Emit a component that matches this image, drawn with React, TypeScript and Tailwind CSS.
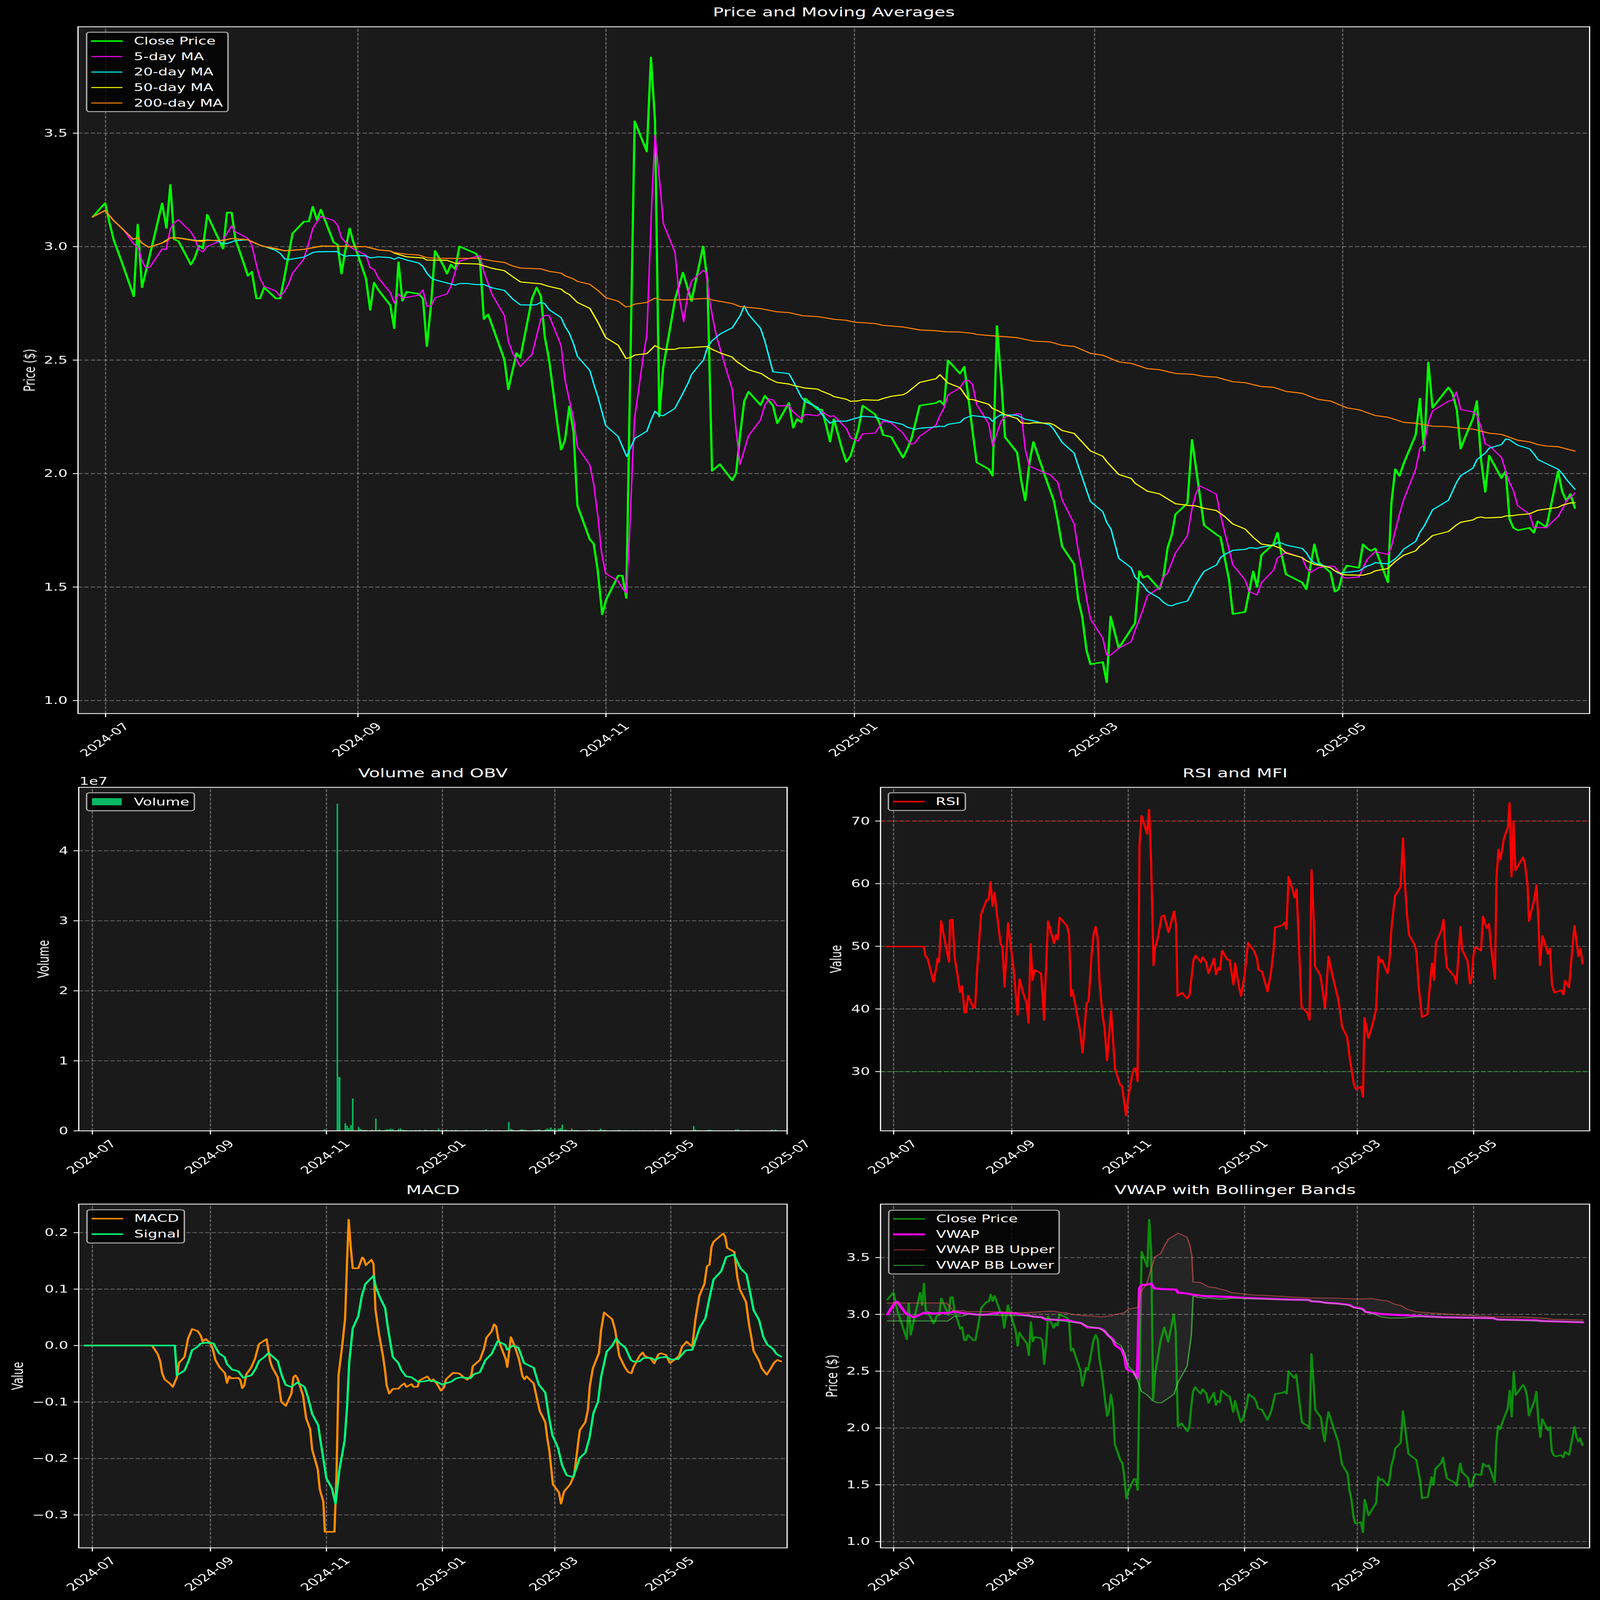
import React from "react";

type P = [number, number];
const map = (ox: number, oy: number, sx: number, sy: number, a: number[]): P[] => {
  const o: P[] = [];
  for (let i = 0; i < a.length; i += 2) o.push([ox + a[i] / sx, oy + a[i + 1] / sy]);
  return o;
};
const Z5 = (a: number[]) => map(220, 650, 0.9224, 0.9224, a);
const Z6 = (a: number[]) => map(1650, 1100, 0.9224, 0.9224, a);
const Z7 = (a: number[]) => map(2900, 1300, 1.018, 1.018, a);
const Z8 = (a: number[]) => map(2280, 3200, 0.716, 1.081, a);
const Z9 = (a: number[]) => map(0, 4880, 0.7063, 1.206, a);
const Z10 = (a: number[]) => map(3000, 4880, 1.0667, 1.0667, a);
const Z12 = (a: number[]) => map(2300, 5000, 1.206, 1.206, a);
const d = (p: P[]) => p.map(([x, y], i) => `${i ? "L" : "M"}${x.toFixed(1)} ${y.toFixed(1)}`).join("");

const close: P[] = [
  ...Z5([36,214,68,162,80,240,90,300,110,380,142,512,152,243,163,478,182,365,215,163,226,256,236,94,246,298,257,305,289,393,299,367,310,322,320,333,331,206,372,333,382,198,394,198,404,300,415,345,436,435,446,420,458,520,467,520,478,479,508,520,519,520,530,440,541,355,551,276,580,232,593,231,603,176,614,226,624,187,657,310,667,318,677,427,687,340,698,257,708,310,720,360,740,445,751,563,761,461,772,488,803,546,813,632,824,384,834,529,845,495,876,503,887,520,897,699,908,540,918,342,939,395,949,427,959,393,970,410,981,325,1024,352,1034,380,1044,597,1055,580,1097,750,1107,861,1118,790,1128,725,1138,743,1168,520,1180,479,1191,512,1201,665,1212,750,1222,860,1233,985,1243,1087,1253,1052,1264,925,1275,1020,1285,1297,1317,1424,1327,1440]),
  ...Z6([18,1120,30,1290,40,1235,71,1145,82,1145,92,1228]),
  [1773,493],[1807,616],[1818.6,234],[1830,493],[1836,1100],
  ...Z6([177,548,187,365,218,106,238,8,260,115,290,-90,301,38,313,752,333,727,365,787,375,760,385,620,396,490,407,455,438,505,449,470,470,507,481,573,511,497,522,590,532,557,543,570,553,480,585,521,596,522,606,575,617,642,627,558,649,675,659,718,670,695,680,645,691,590,701,507,733,540,744,570,754,617,775,625,805,702,816,670,827,630,848,507,890,497,900,489,911,505,921,337,952,387,963,361,973,470,984,600,995,720,1026,745,1036,770,1047,208,1058,410,1068,625,1099,683,1110,790,1120,863,1131,720,1141,643,1172,775,1194,865,1204,940,1215,1035,1246,1102,1256,1230,1267,1300,1278,1425,1288,1477,1320,1469,1330,1545,1340,1298,1361,1417,1403,1323,1414,1128,1424,1153,1435,1145,1466,1195,1476,1150,1487,1040,1498,990,1507,915,1538,873]),
  ...Z7([438,497,472,851,508,890,519,900,543,1075,554,1219,589,1210,612,1042,623,1107,635,975,670,928,681,882,693,975,705,1054,751,1088,763,1116,786,930,798,1004,832,1047,844,1126,855,1117,867,1047,878,1018,913,1027,924,930,936,947,947,957,959,947,995,1087,1005,760,1016,619,1028,647,1040,595,1074,477,1086,327,1098,543,1110,177,1122,365,1167,281,1179,306,1191,373,1202,534,1225,450,1237,410,1248,337,1260,580,1272,713,1283,563,1318,656,1330,627,1341,825,1352,862,1364,872,1398,862,1410,882,1421,835,1446,860,1479,628,1491,713,1503,750,1514,722,1527,780]),
];
const ma5: P[] = [
  ...Z5([36,214,68,190,90,228,115,262,140,312,155,335,163,380,173,405,183,403,215,334,225,337,236,260,246,235,257,225,289,270,299,295,310,338,320,345,331,325,372,300,394,248,404,270,436,295,446,320,458,395,467,445,478,475,508,492,519,512,530,495,541,465,551,425,580,372,593,310,603,258,614,232,624,212,656,227,667,245,677,292,698,325,708,335,740,357,751,405,761,411,772,443,803,498,813,537,824,503,834,518,845,516,876,508,887,488,897,549,908,549,918,518,949,503,959,475,970,420,981,380,1024,363,1034,360,1044,420,1065,505,1097,585,1107,680,1118,725,1138,775,1168,730,1191,597,1201,584,1212,584,1243,697,1253,825,1264,900,1275,970,1285,1077,1317,1145,1327,1215,1338,1340,1347,1470,1358,1553]),
  ...Z6([40,1137,71,1165,82,1193,92,1209,100,1000,108,720,113,560,135,330,145,240]),
  [1821.5,800],[1830,551],[1847,800],[1853,908],[1886,1027],[1898,1214],
  ...Z6([240,192,250,90,260,40,290,0,298,8,305,100,315,180,325,250,345,350,365,445,375,600,385,728,407,620,438,560,449,505,460,482,470,485,481,508,511,507,522,530,543,557,553,540,585,545,596,530,617,548,627,545,659,592,670,628,690,640,701,613,733,610,754,565,775,572,805,610,816,635,827,652,836,647,848,622,890,580,900,545,911,515,921,467,952,440,963,415,973,411,984,427,995,503,1026,575,1036,658,1047,610,1058,565,1068,550,1099,537,1110,540,1120,670,1131,735,1141,740,1172,760,1183,765,1204,795,1215,860,1246,950,1256,1045,1267,1130,1278,1230,1288,1307,1320,1380,1330,1443,1340,1443,1361,1417,1393,1393,1403,1350,1414,1310,1425,1265,1435,1220,1466,1190,1476,1150,1487,1135,1498,1095,1507,1060,1538,995]),
  ...Z7([438,780,449,720,460,688,507,722,519,810,531,880,543,950,554,1015,589,1078,600,1125,623,1140,635,1090,670,1037,681,987,705,963,740,980,751,985,763,1027,775,1047,798,1027,832,1020,844,1023,867,1067,878,1070,913,1065,924,1030,936,993,959,960,995,972,1005,940,1028,805,1040,745,1074,620,1086,533,1098,518,1110,425,1122,378,1167,338,1179,333,1190,300,1202,372,1237,382,1248,393,1260,445,1272,515,1283,521,1318,570,1330,627,1341,675,1352,707,1364,770,1398,806,1410,861,1446,861,1479,815,1491,785,1503,750,1527,718]),
];
const ma20: P[] = [
  ...Z5([36,214,68,190,90,228,115,262,140,298,152,292,163,312,180,328,215,312,236,293,257,293,290,300,320,305,331,300,360,305,372,315,384,313,404,303,436,300,458,315,478,325,508,340,520,352,531,372,541,374,580,365,603,348,614,345,665,344,677,356,687,362,698,359,740,360,752,368,772,364,803,367,813,373,824,366,845,376,876,387,887,400,897,425,908,443,918,450,970,470,981,464,1000,464,1024,468,1044,468,1065,480,1097,490,1107,505,1118,522,1138,544,1168,545,1180,543,1191,534,1201,540,1212,562,1243,592,1253,625,1264,650,1275,690,1285,737,1317,790,1327,840,1338,890,1358,997,1390,1038,1412,1113,1422,1080,1433,1045,1464,1018,1475,975,1485,943,1495,957,1506,960,1536,933]),
  ...Z6([238,460,252,420,260,390,291,335,302,285,312,265,335,237,365,215,385,170,396,133,407,165,438,217,449,265,470,380,511,387,522,415,543,475,553,492,585,513,596,540,617,573,627,565,659,565,700,547,733,550,754,560,805,578,816,588,836,596,848,592,890,587,900,584,911,586,921,577,952,570,963,555,984,544,1026,552,1036,566,1047,550,1058,541,1099,543,1120,558,1141,564,1183,579,1194,597,1215,645,1246,685,1256,730,1288,867,1320,905,1330,945,1341,970,1361,1080,1393,1115,1403,1150,1424,1180,1435,1203,1466,1230,1476,1245,1487,1255,1498,1258,1507,1252,1538,1240]),
  ...Z7([438,1130,449,1095,472,1042,508,1015,519,985,531,972,554,955,589,951,600,945,612,945,623,947,635,942,670,933,681,923,693,925,705,933,751,947,763,965,775,993,786,1007,832,1027,844,1040,855,1050,913,1040,924,1030,936,1020,947,1015,959,1006,995,1011,1016,990,1028,973,1040,950,1074,918,1086,880,1098,855,1122,787,1144,768,1167,748,1191,672,1202,646,1237,615,1248,580,1272,552,1283,532,1318,517,1330,494,1341,497,1364,520,1398,535,1410,555,1422,580,1444,595,1479,619,1491,637,1503,662,1527,702]),
];
const ma50: P[] = [
  ...Z5([36,214,68,190,90,228,115,262,140,298,152,292,163,312,180,328,215,312,236,293,257,293,300,303,331,302,372,302,394,295,436,300,470,322,510,335,531,341,580,336,625,324,665,324,740,326,772,338,803,342,813,350,845,364,887,368,897,376,949,377,970,388,1030,391,1065,407,1097,416,1118,438,1138,458,1190,465,1212,475,1243,485,1253,497,1264,505,1285,535,1317,557,1338,610,1358,667,1390,695,1410,745,1422,742,1433,732,1464,727,1485,697,1495,705,1506,711,1536,711]),
  ...Z6([228,291,250,290,300,285,315,297,335,310,365,325,375,340,408,373,440,387,460,406,480,420,511,426,522,431,553,441,585,445,596,453,617,465,627,473,659,483,670,491,691,489,701,485,740,487,754,480,775,472,805,466,816,458,848,420,890,406,900,391,921,422,952,440,973,483,984,484,1026,502,1036,518,1047,524,1068,541,1099,555,1110,572,1131,574,1141,571,1183,573,1194,579,1215,600,1246,611,1288,677,1320,697,1330,717,1361,765,1393,780,1403,798,1435,828,1466,838,1507,875,1538,881]),
  ...Z7([449,771,472,781,507,790,531,815,554,846,589,867,612,901,635,929,670,936,693,948,705,966,751,985,763,998,786,1013,832,1027,844,1040,867,1055,878,1057,924,1058,947,1049,959,1040,995,1030,1016,1001,1040,975,1074,957,1086,937,1098,925,1122,894,1167,877,1190,850,1202,839,1237,829,1248,820,1260,817,1272,821,1318,818,1330,813,1352,811,1364,808,1398,804,1422,789,1479,777,1491,768,1514,759,1527,758]),
];
const ma200: P[] = [
  ...Z5([36,214,68,190,90,228,115,262,140,298,152,292,163,312,180,328,215,312,225,306,236,293,257,294,300,304,320,307,331,302,372,303,394,295,436,300,470,322,510,333,531,341,580,336,625,323,665,324,740,326,772,338,803,342,813,348,845,354,876,357,897,367,918,369,970,370,1030,369,1065,379,1097,385,1118,398,1138,406,1190,409,1212,418,1243,425,1253,435,1275,447,1285,456,1317,467,1338,490,1358,517,1390,530,1410,552,1422,549,1433,541,1464,535,1485,519,1495,523,1506,526,1536,526]),
  ...Z6([250,108,300,105,315,111,365,124,385,135,438,143,480,155,511,158,548,170,585,173,627,183,659,187,680,194,733,199,754,206,805,212,848,223,890,226,915,230,952,231,985,236,995,240,1036,245,1099,252,1141,265]),
  ...Z7([34,92,68,106,103,111,150,140,184,147,230,175,265,181,311,203,345,207,392,223,438,226,472,235,507,238,554,257,589,261,635,277,670,280,705,297,751,305,796,330,832,337,878,365,913,373,959,397,995,404,1040,425,1074,429,1122,441,1167,443,1202,450,1237,453,1283,470,1318,475,1364,499,1398,506,1422,517,1444,523,1479,526,1527,544]),
];
const rsi = Z8([141,702,215,702,219,745,223,755,235,858,240,800,243,755,246,770,250,590,257,670,262,730,266,770,268,585,273,585,277,750,283,830,288,903,292,875,297,993,300,993,304,917,315,973,318,970,322,810,330,560,341,497,345,497,349,418,353,525,357,465,362,565,369,690,373,705,377,880,384,598,389,695,395,800,403,1003,407,845,414,905,421,950,425,1038,429,690,433,850,437,805,450,820,456,1025,460,790,464,590,476,688,480,650,483,672,487,574,502,612,506,650,510,920,513,893,522,1000,528,1070,533,1170,541,950,545,945,551,740,555,650,559,615,563,660,567,860,573,1005,577,1060,582,1203,590,985,598,1240,608,1310,612,1315,620,1445,624,1370,628,1320,632,1270,636,1238,640,1238,643,1295,647,250,651,127,662,207,666,100,670,320,675,785,678,710,684,660,691,570,696,565,705,640,716,547,720,605,723,920,732,905,742,930,747,915,755,760,759,742,770,772,773,748,780,770,785,820,796,755,800,825,805,795,808,805,812,720,823,760,827,760,835,870,838,775,846,880,850,920,857,830,864,685,876,722,882,755,885,805,892,812,903,900,910,815,915,720,918,618,933,608,938,595,941,625,945,395,953,450,957,487,961,450,965,650,971,968,983,995,987,1025,991,365,995,560,998,790,1009,830,1018,972,1025,745,1033,830,1044,930,1048,985,1052,1055,1062,1098,1068,1200,1076,1310,1080,1330,1090,1317,1094,1363,1097,1015,1105,1105,1113,1045,1120,980,1125,745,1129,772,1132,760,1143,820,1147,760,1151,620,1158,480,1169,440,1174,225,1177,400,1182,560,1186,650,1198,697,1201,730,1205,870,1212,1013,1223,1000,1227,890,1232,775,1236,850,1240,685,1251,630,1255,583,1259,730,1262,795,1277,835,1281,865,1289,615,1292,715,1303,765,1308,865,1312,830,1315,740,1319,705,1330,720,1334,570,1338,600,1342,622,1346,602,1350,700,1358,845,1361,400,1365,275,1369,320,1376,225,1384,175,1387,70,1391,395,1395,150,1399,367,1410,325,1414,310,1418,340,1423,430,1426,590,1437,490,1441,432,1445,600,1448,785,1453,655,1460,705,1464,735,1468,710,1472,870,1477,905,1487,897,1491,895,1495,913,1498,852,1506,882,1510,780,1517,610,1525,745,1529,710,1533,778]);
const macd = Z9([167,714,300,714,311,755,316,790,320,850,325,880,335,900,341,917,349,870,353,800,364,770,371,680,379,633,390,643,396,665,400,695,406,682,414,700,420,730,425,785,433,820,444,850,448,898,452,865,456,875,470,873,474,882,478,923,482,910,486,855,495,825,503,780,511,707,526,682,533,790,537,820,548,870,555,990,564,1010,575,950,579,870,583,860,587,875,598,960,604,1070,612,1125,616,1225,627,1320,631,1420,638,1480,641,1628,660,1628,664,1350,668,860,675,720,681,580,685,290,688,97,692,230,696,335,707,335,715,282,718,290,722,320,733,293,737,315,741,540,748,660,756,770,760,840,763,910,768,950,775,927,786,926,793,908,798,900,802,917,812,903,816,917,824,916,828,885,843,866,851,890,855,880,863,905,870,935,876,920,880,880,894,848,906,851,918,875,922,882,930,860,933,815,947,785,955,730,960,675,970,645,975,610,979,620,983,680,990,730,998,780,1001,820,1008,673,1016,720,1024,780,1031,865,1035,880,1039,865,1053,900,1060,980,1065,1035,1076,1090,1080,1170,1084,1230,1091,1395,1103,1435,1107,1490,1113,1430,1125,1395,1133,1350,1140,1210,1144,1130,1155,1090,1160,1030,1164,910,1170,825,1182,750,1186,640,1192,552,1208,585,1214,640,1222,765,1234,825,1240,845,1246,850,1250,820,1262,765,1268,748,1272,765,1284,778,1291,802,1299,758,1304,752,1314,760,1322,800,1330,785,1340,765,1346,720,1355,695,1366,720,1372,590,1380,470,1390,412,1395,325,1400,318,1404,230,1408,205,1422,175,1427,165,1431,180,1435,235,1449,255,1455,380,1460,440,1472,500,1478,610,1483,680,1487,740,1498,790,1503,825,1513,857,1520,830,1528,797,1534,785,1541,792]);
const signal = Z9([167,714,345,714,349,860,364,837,372,790,379,737,390,720,395,705,406,700,421,703,432,752,443,770,448,805,458,832,470,840,480,872,496,860,504,830,511,790,521,772,530,750,548,790,556,860,564,908,575,917,587,895,601,917,608,970,616,1050,628,1105,632,1175,640,1300,644,1365,655,1415,662,1490,670,1320,680,1180,685,1010,689,800,696,630,707,570,714,470,721,412,737,372,742,430,750,480,760,530,765,620,775,770,786,800,792,835,801,865,812,870,825,893,840,888,847,885,860,890,872,905,890,892,900,875,910,870,928,875,935,855,947,845,958,785,970,755,982,693,997,710,1001,735,1011,715,1023,725,1034,800,1053,823,1063,905,1076,945,1083,1060,1090,1155,1101,1215,1109,1300,1118,1350,1131,1360,1138,1310,1144,1265,1155,1240,1163,1170,1171,1045,1180,990,1186,870,1197,745,1208,715,1216,680,1222,700,1234,725,1245,785,1250,793,1262,792,1270,775,1285,775,1292,785,1302,773,1315,770,1325,783,1338,780,1353,738,1366,735,1372,690,1381,625,1392,580,1400,480,1408,390,1423,350,1433,280,1448,268,1461,335,1473,365,1480,450,1487,540,1498,590,1506,670,1514,710,1525,730,1532,755,1541,768]);
const vwap: P[] = [
  ...Z12([216,417,237,370,245,355,250,356,280,415,290,418,302,430,310,428,340,409,350,408,370,412,400,410,425,408,440,403,480,412,520,418,550,418,575,412,600,408,625,411,648,411,655,415,690,423,710,428,735,430,750,442,825,445,840,452,868,459,890,480,930,484,945,495,960,520,975,537,983,567,1005,590,1015,625,1022,683,1030,692,1045,700,1058,730,1065,290,1072,273,1090,271,1105,265,1115,289,1140,292,1189,295,1195,310,1225,314,1250,321,1285,327,1320,328,1400,334]),
  ...Z10([510,425,640,432,700,434,708,440,735,442,750,446,785,449,820,455,835,466,860,472,870,486,915,495,970,499,1100,509,1250,513,1262,519,1380,522,1390,525,1517,531]),
];
const bbU: P[] = [
  ...Z12([216,361,415,361,425,375,438,398,470,398,485,403,520,403,570,403,610,405,640,408,690,408,720,405,755,401,780,402,800,407,820,410,850,419,880,423,905,424,935,429,970,424,985,417,1015,408,1028,390,1055,384,1060,385,1068,310,1090,265,1105,190,1117,135,1137,118,1148,85,1163,47,1180,33,1195,18,1225,38,1235,75,1242,130,1246,258,1270,260,1298,282,1320,285,1343,295,1360,300,1375,310,1420,317,1455,322,1500,324,1568,331]),
  ...Z10([700,425,780,426,845,430,890,428,915,435,935,438,958,453,975,458,995,475,1020,485,1060,490,1190,502,1250,507,1340,508,1400,513,1430,518,1517,521]),
];
const bbL: P[] = [
  ...Z12([216,449,420,449,440,427,470,425,490,414,515,418,600,422,690,423,745,435,825,453,870,460,890,475,930,485,950,500,975,545,1003,570,1015,605,1028,670,1045,695,1060,745,1072,795,1090,810,1110,840,1125,850,1140,850,1160,830,1182,808,1195,750,1226,670,1240,520,1246,327,1262,333,1285,338,1300,336,1335,342,1365,340,1378,337,1420,339,1568,345]),
  ...Z10([700,434,708,438,735,442,750,447,785,450,820,457,835,467,860,475,870,486,895,495,917,508,945,513,985,512,1030,505,1100,509,1250,513,1262,519,1380,525,1517,530]),
];
const closeV: P[] = close.map(([x, y]) => {
  const t = (x - 295) / 11.37;
  const price = 1 + (2849 - y) / 923;
  return [2496.5 + t * 5.33, 6269.5 - (price - 1) * 462];
});
const bars = [8,1358,39,1366,58,941,78,1310,84,1330,90,1348,97,1324,103,1112,123,1340,129,1355,135,1363,141,1364,148,1364,167,1360,173,1365,181,1272,193,1358,212,1363,218,1357,225,1358,231,1353,238,1356,257,1355,264,1351,270,1362,276,1364,283,1364,302,1366,315,1364,321,1366,328,1362,347,1360,353,1364,366,1365,372,1365,392,1353,398,1366,418,1360,437,1364,450,1362,482,1366,488,1364,502,1366,507,1366,533,1366,540,1364,546,1366,552,1358,572,1364,591,1366,598,1364,623,1366,629,1299,636,1355,642,1360,661,1364,668,1360,674,1358,681,1362,687,1364,712,1362,719,1362,726,1360,732,1358,752,1360,758,1351,764,1358,770,1344,777,1358,784,1350,797,1352,803,1348,809,1320,816,1362,822,1360,841,1352,848,1365,855,1364,861,1364,886,1366,899,1360,905,1366,912,1364,931,1364,938,1352,944,1364,950,1364,956,1364,975,1366,982,1366,988,1366,995,1364,1002,1362,1020,1366,1027,1366,1047,1366,1066,1366,1085,1366,1124,1364,1136,1366,1162,1366,1207,1366,1245,1366,1252,1332,1258,1360,1265,1366,1271,1364,1290,1366,1297,1364,1303,1362,1309,1362,1316,1366,1341,1366,1393,1360,1400,1358,1406,1364,1425,1366,1431,1364,1438,1366,1476,1366,1496,1366,1515,1360,1522,1364,1528,1360,1534,1366];
const volumeBars: { x: number; y: number; w: number }[] = [{ x: 942.5, y: 3269, w: 4.25 }];
for (let i = 0; i < bars.length; i += 2) {
  volumeBars.push({ x: 900 + bars[i] / 1.206, y: 3900 + bars[i + 1] / 1.96, w: bars[i] === 58 ? 6 : 4.25 });
}

const GRID = { stroke: "#ffffff", strokeOpacity: 0.33, strokeWidth: 3.33, strokeDasharray: "12.33 5.33", fill: "none" };
const TICK = 41.67;

type Tick = { p: number; label: string };
function Chart(props: {
  box: string;
  cls: string;
  l: number; r: number; t: number; b: number;
  xt: Tick[]; yt: Tick[];
  ylabel: string; ylx: number;
  children: React.ReactNode;
}) {
  const { box, cls, l, r, t, b, xt, yt, ylabel, ylx, children } = props;
  return (
    <svg viewBox={box} className={cls}>
      <rect x={l} y={t} width={r - l} height={b - t} className="fill-[#1a1a1a]" />
      {xt.map((k) => <path key={k.label} d={`M${k.p} ${b}L${k.p} ${t}`} {...GRID} />)}
      {yt.map((k) => <path key={k.label} d={`M${l} ${k.p}L${r} ${k.p}`} {...GRID} />)}
      {children}
      <rect x={l} y={t} width={r - l} height={b - t} fill="none" stroke="#ffffff" strokeWidth={3.33} />
      {xt.map((k) => (
        <g key={k.label}>
          <path d={`M${k.p} ${b}L${k.p} ${b + 14.6}`} stroke="#ffffff" strokeWidth={3.33} />
          <text
            x={k.p - 3}
            y={b + 106}
            fontSize={TICK}
            textAnchor="middle"
            dominantBaseline="central"
            transform={`rotate(-45 ${k.p - 3} ${b + 106})`}
            className="fill-white"
          >
            {k.label}
          </text>
        </g>
      ))}
      {yt.map((k) => (
        <g key={k.label}>
          <path d={`M${l} ${k.p}L${l - 14.6} ${k.p}`} stroke="#ffffff" strokeWidth={3.33} />
          <text x={l - 29.2} y={k.p} fontSize={TICK} textAnchor="end" dominantBaseline="central" className="fill-white">
            {k.label}
          </text>
        </g>
      ))}
      <text
        x={ylx}
        y={(t + b) / 2}
        fontSize={TICK}
        textAnchor="middle"
        dominantBaseline="central"
        transform={`rotate(-90 ${ylx} ${(t + b) / 2})`}
        className="fill-white"
      >
        {ylabel}
      </text>
    </svg>
  );
}

const Line = ({ p, c, w = 4.17, o = 1 }: { p: P[]; c: string; w?: number; o?: number }) => (
  <path d={d(p)} fill="none" stroke={c} strokeWidth={w} strokeOpacity={o} strokeLinejoin="round" strokeLinecap="round" />
);

function Legend({ cls, items }: { cls: string; items: { label: string; swatch: string }[] }) {
  return (
    <div className={`absolute flex flex-col justify-center rounded-[10px] border-[4px] border-[#ababab] bg-black/80 pl-[10px] text-[41.67px] leading-none text-white ${cls}`}>
      {items.map((it) => (
        <div key={it.label} className="flex h-[63px] items-center gap-[31px]">
          <div className="flex w-[89px] justify-center"><div className={it.swatch} /></div>
          <span className="whitespace-nowrap">{it.label}</span>
        </div>
      ))}
    </div>
  );
}

const T1 = "text-[50px] leading-none text-white flex items-center justify-center";
const ticks = (a: [number, string][]): Tick[] => a.map(([p, label]) => ({ p, label }));
const xMain = ticks([[295,"2024-07"],[1000,"2024-09"],[1693,"2024-11"],[2387,"2025-01"],[3058,"2025-03"],[3751,"2025-05"]]);
const xVol = ticks([[258,"2024-07"],[588,"2024-09"],[912,"2024-11"],[1236,"2025-01"],[1550,"2025-03"],[1874,"2025-05"],[2199,"2025-07"]]);
const xLeft: Tick[] = xVol.slice(0, 6);
const xRight = ticks([[2496.5,"2024-07"],[2826.5,"2024-09"],[3152,"2024-11"],[3477,"2025-01"],[3792,"2025-03"],[4117,"2025-05"]]);
const yPrice1: Tick[] = ["1.0","1.5","2.0","2.5","3.0","3.5"].map((label, i) => ({ label, p: 2849 - i * 461.5 }));
const yVol: Tick[] = ["0","1","2","3","4"].map((label, i) => ({ label, p: 4599 - i * 284.75 }));
const yRsi: Tick[] = ["30","40","50","60","70"].map((label, i) => ({ label, p: 4358 - i * 254.75 }));
const yMacd: Tick[] = ["−0.3","−0.2","−0.1","0.0","0.1","0.2"].map((label, i) => ({ label, p: 6161 - i * 229.6 }));
const yVwap: Tick[] = ["1.0","1.5","2.0","2.5","3.0","3.5"].map((label, i) => ({ label, p: 6269.5 - i * 231 }));

export default function App() {
  // The figure is 4470×6507. In a window of that size this scale is 1; in any other window it keeps the whole figure in view.
  const sx = window.innerWidth / 4470;
  const sy = window.innerHeight / 6507;
  return (
    <div className="h-screen w-screen overflow-hidden bg-black">
      <div
        className="flex h-[6507px] w-[4470px] origin-top-left flex-col bg-black [font-family:'DejaVu_Sans',sans-serif]"
        style={{ transform: `scale(${sx}, ${sy})` }}
      >
        <section className="flex h-[3030px] flex-col">
          <h2 className={`${T1} h-[100px] pl-[218px] pr-[29px]`}>Price and Moving Averages</h2>
          <div className="relative">
            <Chart box="0 100 4470 2930" cls="block h-[2930px] w-[4470px] overflow-visible" l={218} r={4441} t={109} b={2902} xt={xMain} yt={yPrice1} ylabel="Price ($)" ylx={83}>
              <Line p={close} c="#00ff00" w={6.25} />
              <Line p={ma5} c="#ff00ff" />
              <Line p={ma20} c="#00ffff" />
              <Line p={ma50} c="#ffff00" />
              <Line p={ma200} c="#ff8000" />
            </Chart>
            <Legend
              cls="left-[240px] top-[29px] h-[327px] w-[399px]"
              items={[
                { label: "Close Price", swatch: "h-[6px] w-[89px] bg-[#00ff00]" },
                { label: "5-day MA", swatch: "h-[4px] w-[87px] bg-[#ff00ff]" },
                { label: "20-day MA", swatch: "h-[4px] w-[87px] bg-[#00ffff]" },
                { label: "50-day MA", swatch: "h-[4px] w-[87px] bg-[#ffff00]" },
                { label: "200-day MA", swatch: "h-[4px] w-[87px] bg-[#ff8000]" },
              ]}
            />
          </div>
        </section>

        <section className="grid h-[1760px] grid-cols-2">
          <div className="flex flex-col pt-[84px]">
            <h2 className={`${T1} h-[60px] pl-[220px] pr-[36px]`}>Volume and OBV</h2>
            <div className="relative">
              <Chart box="0 3174 2235 1616" cls="block h-[1616px] w-[2235px] overflow-visible" l={220} r={2199} t={3202} b={4599} xt={xVol} yt={yVol} ylabel="Volume" ylx={122}>
                {volumeBars.map((v, i) => (
                  <rect key={i} x={v.x - v.w / 2} y={v.y} width={v.w} height={4599 - v.y} fill="#00ff7f" fillOpacity={0.7} />
                ))}
                <text x={222} y={3192} fontSize={TICK} className="fill-white">1e7</text>
              </Chart>
              <Legend
                cls="left-[240px] top-[48px] h-[77px] w-[305px]"
                items={[{ label: "Volume", swatch: "h-[29px] w-[83px] bg-[#08b862]" }]}
              />
            </div>
          </div>
          <div className="flex flex-col pt-[84px]">
            <h2 className={`${T1} h-[60px] pl-[225px] pr-[29px]`}>RSI and MFI</h2>
            <div className="relative">
              <Chart box="2235 3174 2235 1616" cls="block h-[1616px] w-[2235px] overflow-visible" l={2460} r={4441} t={3202} b={4599} xt={xRight} yt={yRsi} ylabel="Value" ylx={2336}>
                <path d="M2460 3339L4441 3339" stroke="#ff0000" strokeOpacity={0.5} strokeWidth={4.17} strokeDasharray="15.4 6.67" />
                <path d="M2460 4358L4441 4358" stroke="#00ff00" strokeOpacity={0.35} strokeWidth={4.17} strokeDasharray="15.4 6.67" />
                <Line p={rsi} c="#ff0000" w={6} />
              </Chart>
              <Legend
                cls="left-[245px] top-[48px] h-[76px] w-[219px]"
                items={[{ label: "RSI", swatch: "h-[6px] w-[88px] bg-[#ff0000]" }]}
              />
            </div>
          </div>
        </section>

        <section className="grid h-[1717px] grid-cols-2">
          <div className="flex flex-col pt-[20px]">
            <h2 className={`${T1} h-[60px] pl-[220px] pr-[36px]`}>MACD</h2>
            <div className="relative">
              <Chart box="0 4870 2235 1637" cls="block h-[1637px] w-[2235px] overflow-visible" l={220} r={2199} t={4897} b={6295} xt={xLeft} yt={yMacd} ylabel="Value" ylx={50}>
                <Line p={macd} c="#ff8c00" w={6.25} />
                <Line p={signal} c="#00ff7f" w={6.25} />
              </Chart>
              <Legend
                cls="left-[241px] top-[48px] h-[139px] w-[276px]"
                items={[
                  { label: "MACD", swatch: "h-[6px] w-[88px] bg-[#ff8c00]" },
                  { label: "Signal", swatch: "h-[6px] w-[88px] bg-[#00ff7f]" },
                ]}
              />
            </div>
          </div>
          <div className="flex flex-col pt-[20px]">
            <h2 className={`${T1} h-[60px] pl-[225px] pr-[29px]`}>VWAP with Bollinger Bands</h2>
            <div className="relative">
              <Chart box="2235 4870 2235 1637" cls="block h-[1637px] w-[2235px] overflow-visible" l={2460} r={4441} t={4897} b={6295} xt={xRight} yt={yVwap} ylabel="Price ($)" ylx={2325}>
                <path d={d(bbU) + d([...bbL].reverse()).replace("M", "L") + "Z"} fill="#ffffff" fillOpacity={0.05} />
                <Line p={closeV} c="#00ff00" w={6.25} o={0.5} />
                <Line p={vwap} c="#ff00ff" w={8.33} />
                <Line p={bbU} c="#ff5c5c" o={0.5} />
                <Line p={bbL} c="#5cff5c" o={0.5} />
              </Chart>
              <Legend
                cls="left-[246px] top-[50px] h-[263px] w-[480px]"
                items={[
                  { label: "Close Price", swatch: "h-[6px] w-[89px] bg-[#0c8f0c]" },
                  { label: "VWAP", swatch: "h-[8px] w-[89px] bg-[#ff00ff]" },
                  { label: "VWAP BB Upper", swatch: "h-[4px] w-[87px] bg-[#8a2a2a]" },
                  { label: "VWAP BB Lower", swatch: "h-[4px] w-[87px] bg-[#2a8a2a]" },
                ]}
              />
            </div>
          </div>
        </section>
      </div>
    </div>
  );
}
